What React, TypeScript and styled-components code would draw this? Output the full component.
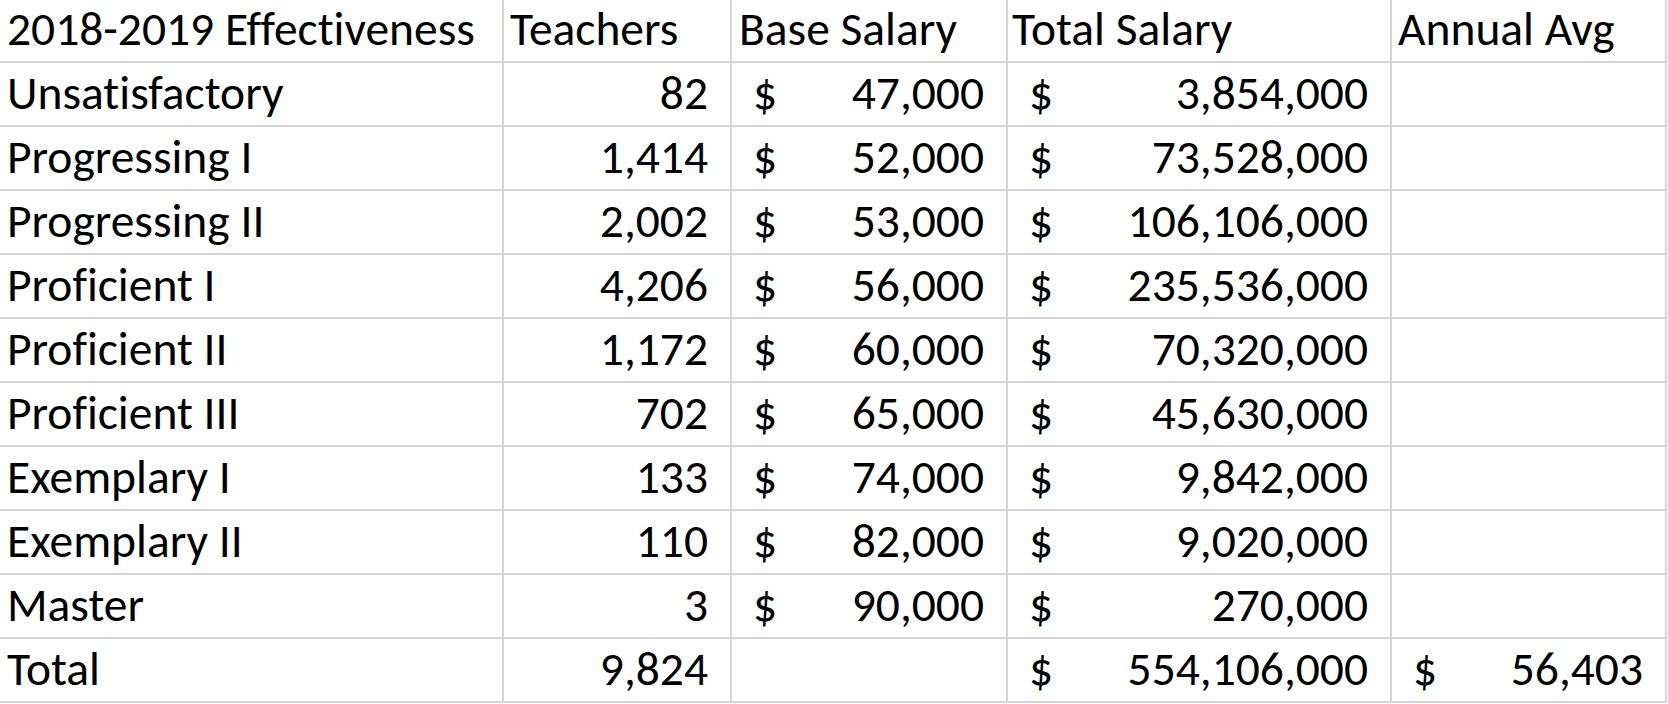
import React from "react";
import styled, { createGlobalStyle } from "styled-components";

const GlobalStyle = createGlobalStyle`
  html, body {
    margin: 0;
    padding: 0;
    background: #ffffff;
  }
  body {
    font-family: Carlito, Lato, "Liberation Sans", sans-serif;
    color: #000000;
    overflow: hidden;
  }
`;

const Sheet = styled.div`
  display: grid;
  grid-template-columns: 504px 228px 276px 384px 275px;
  grid-template-rows: 63px;
  grid-auto-rows: 64px;
  width: 1667px;
  font-size: 47.5px;
  line-height: 1;
  font-variant-ligatures: none;
`;

const Box = styled.div<{ $first?: boolean }>`
  display: flex;
  align-items: flex-end;
  height: ${(p) => (p.$first ? "63px" : "64px")};
  border-right: 2px solid #d5d5d5;
  border-bottom: 2px solid #d5d5d5;
  white-space: nowrap;
  box-sizing: border-box;
  padding-bottom: 8px;
`;

const LabelCell = styled(Box)<{ $pad?: number }>`
  padding-left: ${(p) => p.$pad ?? 7}px;
`;

const NumberCell = styled(Box)`
  justify-content: flex-end;
  padding-right: 22px;
`;

const MoneyCell = styled(Box)`
  justify-content: space-between;
  padding-left: 21px;
  padding-right: 22px;
`;

type Row = {
  label: string;
  teachers: string;
  base?: string;
  total?: string;
  avg?: string;
};

const rows: Row[] = [
  { label: "Unsatisfactory", teachers: "82", base: "47,000", total: "3,854,000" },
  { label: "Progressing I", teachers: "1,414", base: "52,000", total: "73,528,000" },
  { label: "Progressing II", teachers: "2,002", base: "53,000", total: "106,106,000" },
  { label: "Proficient I", teachers: "4,206", base: "56,000", total: "235,536,000" },
  { label: "Proficient II", teachers: "1,172", base: "60,000", total: "70,320,000" },
  { label: "Proficient III", teachers: "702", base: "65,000", total: "45,630,000" },
  { label: "Exemplary I", teachers: "133", base: "74,000", total: "9,842,000" },
  { label: "Exemplary II", teachers: "110", base: "82,000", total: "9,020,000" },
  { label: "Master", teachers: "3", base: "90,000", total: "270,000" },
  { label: "Total", teachers: "9,824", total: "554,106,000", avg: "56,403" },
];

const Money: React.FC<{ value?: string }> = ({ value }) =>
  value ? (
    <MoneyCell>
      <span>$</span>
      <span>{value}</span>
    </MoneyCell>
  ) : (
    <Box />
  );

export default function App() {
  return (
    <>
      <GlobalStyle />
      <Sheet>
        <LabelCell $first $pad={7}>2018-2019 Effectiveness</LabelCell>
        <LabelCell $first $pad={6}>Teachers</LabelCell>
        <LabelCell $first $pad={7}>Base Salary</LabelCell>
        <LabelCell $first $pad={4}>Total Salary</LabelCell>
        <LabelCell $first $pad={6}>Annual Avg</LabelCell>
        {rows.map((r) => (
          <React.Fragment key={r.label}>
            <LabelCell>{r.label}</LabelCell>
            <NumberCell>{r.teachers}</NumberCell>
            <Money value={r.base} />
            <Money value={r.total} />
            <Money value={r.avg} />
          </React.Fragment>
        ))}
      </Sheet>
    </>
  );
}
